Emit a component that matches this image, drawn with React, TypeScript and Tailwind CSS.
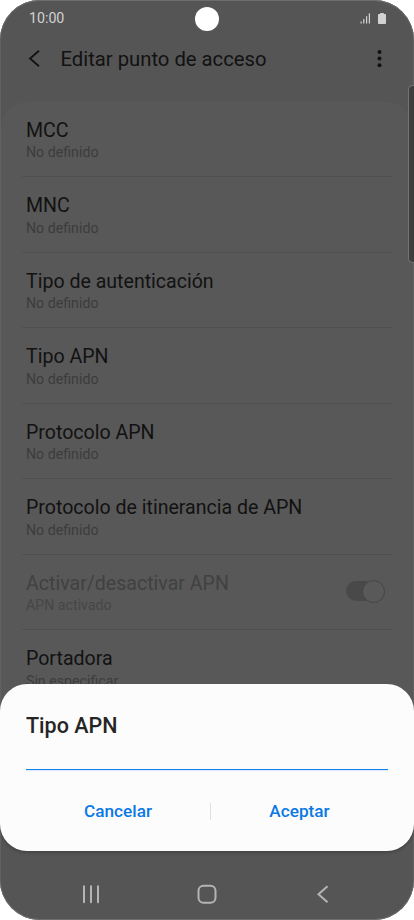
const rows = [
  { title: 'MCC', value: 'No definido' },
  { title: 'MNC', value: 'No definido' },
  { title: 'Tipo de autenticación', value: 'No definido' },
  { title: 'Tipo APN', value: 'No definido' },
  { title: 'Protocolo APN', value: 'No definido' },
  { title: 'Protocolo de itinerancia de APN', value: 'No definido' },
  { title: 'Activar/desactivar APN', value: 'APN activado', disabled: true },
  { title: 'Portadora', value: 'Sin especificar' },
];

function StatusBar() {
  return (
    <div className="flex h-[35px] shrink-0 items-center justify-between pr-[28px] pl-[29px] text-[#d2d2d2]">
      <span className="pt-px text-[14.2px] leading-[18px]">10:00</span>
      <div className="flex items-center gap-[7px] pt-px">
        <svg width="11" height="11" viewBox="0 0 11 11" fill="currentColor">
          <rect x="0.5" y="8.5" width="1.2" height="2" />
          <rect x="3.2" y="6" width="1.2" height="4.5" />
          <rect x="6" y="3.2" width="1.2" height="7.3" />
          <rect x="8.8" y="0.3" width="1.2" height="10.2" />
        </svg>
        <svg width="8" height="11" viewBox="0 0 8 11" fill="currentColor">
          <path d="M2.2 0h3.6v1H7.2q.8 0 .8.8v8.4q0 .8-.8.8H.8Q0 11 0 10.2V1.8Q0 1 .8 1h1.4z" />
        </svg>
      </div>
    </div>
  );
}

function Header() {
  return (
    <div className="flex h-[47px] shrink-0 items-center pr-[32px] pl-[28px] text-[#121212]">
      <svg width="12" height="18" viewBox="0 0 12 18" fill="none" stroke="currentColor" strokeWidth="1.8">
        <path d="M11 0.7 2 8.500l9 7.800" />
      </svg>
      <h1 className="ml-[20.5px] flex-1 text-[20.25px] leading-6 whitespace-nowrap">Editar punto de acceso</h1>
      <svg width="5" height="18" viewBox="0 0 5 18" fill="currentColor">
        <circle cx="2.5" cy="2" r="2" />
        <circle cx="2.5" cy="8.6" r="2" />
        <circle cx="2.5" cy="15.2" r="2" />
      </svg>
    </div>
  );
}

export default function App() {
  return (
    <div className="h-[920px] w-[414px] bg-white font-[Roboto,sans-serif]">
      <div className="relative flex h-full flex-col overflow-hidden rounded-[40px] bg-[#555555] shadow-[inset_0_1px_0_#6e6e6e,inset_0_-1px_0_#6e6e6e,inset_1px_0_0_#616161,inset_-1px_0_0_#616161]">
        <StatusBar />
        <Header />
        <div className="mx-px mt-[19.5px] h-[630px] shrink-0 overflow-hidden rounded-t-[26px] bg-[#585858] px-[21px]">
          {rows.map((row) => (
            <div
              key={row.title}
              className="flex h-[75.5px] items-start justify-between border-b border-[#505050] pt-[17px] pr-[7px] pl-[4px]"
            >
              <div>
                <div className={`text-[19.57px] leading-6 whitespace-nowrap ${row.disabled ? 'text-[#414141]' : 'text-[#121212]'}`}>
                  {row.title}
                </div>
                <div className={`-mt-[1.5px] text-[14.2px] leading-[22px] ${row.disabled ? 'text-[#464646]' : 'text-[#3c3c3c]'}`}>
                  {row.value}
                </div>
              </div>
              {row.disabled && (
                <div className="mt-[7.5px] flex h-[24px] w-[39px] items-center">
                  <div className="h-5 w-[30px] rounded-full bg-[#494949]" />
                  <div className="-ml-[14px] size-[23px] shrink-0 rounded-full border border-[#454545] bg-[#595959]" />
                </div>
              )}
            </div>
          ))}
        </div>
        <div className="flex flex-1 items-end justify-between px-[82px] pb-4 text-[#b4b4b4]">
          <svg width="18" height="20" viewBox="0 0 18 20" stroke="currentColor" strokeWidth="2" strokeLinecap="round">
            <path d="M2 2.300v16M9 2.300v16M16 2.300v16" />
          </svg>
          <svg width="20" height="20" viewBox="0 0 20 20" fill="none" stroke="currentColor" strokeWidth="2">
            <rect x="1.5" y="1.8" width="17" height="17" rx="5" />
          </svg>
          <svg width="18" height="20" viewBox="0 0 18 20" fill="none" stroke="currentColor" strokeWidth="2">
            <path d="M13.5 2.300 4.500 10.300l9 8" />
          </svg>
        </div>

        <div className="absolute top-[7px] left-[195px] size-[23.5px] rounded-full bg-white" />
        <div className="absolute top-[85px] right-0 h-[178px] w-[6px] rounded-l-[5px] border border-r-0 border-[#747474] bg-[#3e3e3e]" />

        <div className="absolute inset-x-0 top-[684px] flex h-[167px] flex-col rounded-[27px] bg-[#fcfcfc] px-[26px] pt-[29px] shadow-[0_2px_3px_rgba(0,0,0,0.2)]">
          <h2 className="text-[21.5px] leading-[26px] font-medium text-[#252525]">Tipo APN</h2>
          <div className="mt-[30px] h-px bg-[#1680f0] shadow-[0_1px_0_#dcebfb]" />
          <div className="mt-[29px] flex items-center text-[17.2px] leading-6 font-medium text-[#0b79e3]">
            <button className="w-[184px] text-center">Cancelar</button>
            <div className="h-[17px] w-px bg-[#e0e0e0]" />
            <button className="flex-1 text-center">Aceptar</button>
          </div>
        </div>
      </div>
    </div>
  );
}
